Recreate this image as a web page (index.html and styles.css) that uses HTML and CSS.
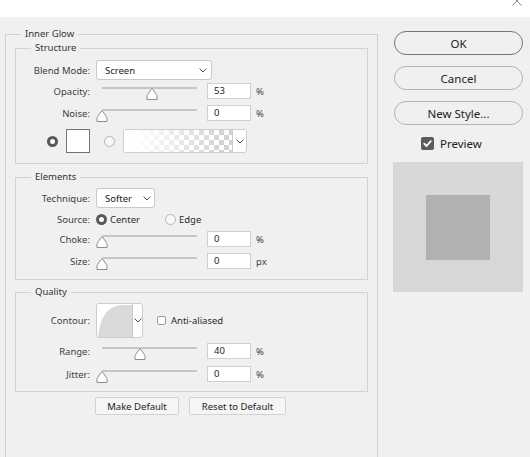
FILE: index.html
```html
<!DOCTYPE html>
<html lang="en">
<head>
<meta charset="utf-8">
<title>Layer Style - Inner Glow</title>
<link rel="stylesheet" href="styles.css">
</head>
<body>
<div class="titlebar">
  <svg class="close" viewBox="0 0 10 10" width="10" height="10"><path d="M0.5 0.5 L9.5 9.5 M9.5 0.5 L0.5 9.5" stroke="#8a8a8a" stroke-width="1" fill="none"/></svg>
</div>
<div class="main">
  <fieldset class="group outer">
    <legend>Inner Glow</legend>

    <fieldset class="group sub structure">
      <legend>Structure</legend>
      <div class="row row-select">
        <span class="lbl">Blend Mode:</span>
        <div class="select sel-blend"><span>Screen</span><svg class="chev" viewBox="0 0 8 5" width="8" height="5"><polyline points="0.5,0.5 4,4 7.5,0.5" fill="none" stroke="#555" stroke-width="1"/></svg></div>
      </div>
      <div class="row row-slider r-opacity">
        <span class="lbl">Opacity:</span>
        <div class="slider"><div class="track"></div><svg class="thumb" style="left:50px" viewBox="0 0 12 12" width="12" height="12"><path d="M1 11.5 V8.2 Q1 7.4 1.6 6.6 L5 1.6 Q6 0.4 7 1.6 L10.4 6.6 Q11 7.4 11 8.2 V11.5 Z" fill="#fff" stroke="#8c8c8c" stroke-width="1"/></svg></div>
        <div class="num">53</div><span class="unit">%</span>
      </div>
      <div class="row row-slider r-noise">
        <span class="lbl">Noise:</span>
        <div class="slider"><div class="track"></div><svg class="thumb" style="left:0px" viewBox="0 0 12 12" width="12" height="12"><path d="M1 11.5 V8.2 Q1 7.4 1.6 6.6 L5 1.6 Q6 0.4 7 1.6 L10.4 6.6 Q11 7.4 11 8.2 V11.5 Z" fill="#fff" stroke="#8c8c8c" stroke-width="1"/></svg></div>
        <div class="num">0</div><span class="unit">%</span>
      </div>
      <div class="row row-color">
        <svg class="radio r-first" viewBox="0 0 11 11" width="11" height="11"><circle cx="5.5" cy="5.5" r="4" fill="#fff" stroke="#585858" stroke-width="3"/></svg>
        <div class="swatch"></div>
        <svg class="radio r-second" viewBox="0 0 11 11" width="11" height="11"><circle cx="5.5" cy="5.5" r="5" fill="#f7f7f7" stroke="#b3b3b3" stroke-width="1"/></svg>
        <div class="gradient">
          <div class="grad-fill"></div>
          <div class="grad-drop"><svg class="chev" viewBox="0 0 8 5" width="8" height="5"><polyline points="0.5,0.5 4,4 7.5,0.5" fill="none" stroke="#555" stroke-width="1"/></svg></div>
        </div>
      </div>
    </fieldset>

    <fieldset class="group sub elements">
      <legend>Elements</legend>
      <div class="row row-select">
        <span class="lbl">Technique:</span>
        <div class="select sel-tech"><span>Softer</span><svg class="chev" viewBox="0 0 8 5" width="8" height="5"><polyline points="0.5,0.5 4,4 7.5,0.5" fill="none" stroke="#555" stroke-width="1"/></svg></div>
      </div>
      <div class="row row-source">
        <span class="lbl">Source:</span>
        <div class="option opt-first">
          <svg class="radio" viewBox="0 0 11 11" width="11" height="11"><circle cx="5.5" cy="5.5" r="4" fill="#fff" stroke="#585858" stroke-width="3"/></svg>
          <span class="opt-text">Center</span>
        </div>
        <div class="option">
          <svg class="radio" viewBox="0 0 11 11" width="11" height="11"><circle cx="5.5" cy="5.5" r="5" fill="#f7f7f7" stroke="#b3b3b3" stroke-width="1"/></svg>
          <span class="opt-text">Edge</span>
        </div>
      </div>
      <div class="row row-slider r-choke">
        <span class="lbl">Choke:</span>
        <div class="slider"><div class="track"></div><svg class="thumb" style="left:0px" viewBox="0 0 12 12" width="12" height="12"><path d="M1 11.5 V8.2 Q1 7.4 1.6 6.6 L5 1.6 Q6 0.4 7 1.6 L10.4 6.6 Q11 7.4 11 8.2 V11.5 Z" fill="#fff" stroke="#8c8c8c" stroke-width="1"/></svg></div>
        <div class="num">0</div><span class="unit">%</span>
      </div>
      <div class="row row-slider r-size">
        <span class="lbl">Size:</span>
        <div class="slider"><div class="track"></div><svg class="thumb" style="left:0px" viewBox="0 0 12 12" width="12" height="12"><path d="M1 11.5 V8.2 Q1 7.4 1.6 6.6 L5 1.6 Q6 0.4 7 1.6 L10.4 6.6 Q11 7.4 11 8.2 V11.5 Z" fill="#fff" stroke="#8c8c8c" stroke-width="1"/></svg></div>
        <div class="num">0</div><span class="unit">px</span>
      </div>
    </fieldset>

    <fieldset class="group sub quality">
      <legend>Quality</legend>
      <div class="row row-contour">
        <span class="lbl">Contour:</span>
        <div class="contour">
          <svg class="curve" viewBox="0 0 35 33" width="35" height="33"><path d="M1 33 Q4 2 25 1 L35 1 L35 33 Z" fill="#dadada"/></svg>
          <div class="contour-drop"><svg class="chev" viewBox="0 0 8 5" width="8" height="5"><polyline points="0.5,0.5 4,4 7.5,0.5" fill="none" stroke="#555" stroke-width="1"/></svg></div>
        </div>
        <div class="check-empty"></div>
        <span class="check-text">Anti-aliased</span>
      </div>
      <div class="row row-slider r-range">
        <span class="lbl">Range:</span>
        <div class="slider"><div class="track"></div><svg class="thumb" style="left:38px" viewBox="0 0 12 12" width="12" height="12"><path d="M1 11.5 V8.2 Q1 7.4 1.6 6.6 L5 1.6 Q6 0.4 7 1.6 L10.4 6.6 Q11 7.4 11 8.2 V11.5 Z" fill="#fff" stroke="#8c8c8c" stroke-width="1"/></svg></div>
        <div class="num">40</div><span class="unit">%</span>
      </div>
      <div class="row row-slider r-jitter">
        <span class="lbl">Jitter:</span>
        <div class="slider"><div class="track"></div><svg class="thumb" style="left:0px" viewBox="0 0 12 12" width="12" height="12"><path d="M1 11.5 V8.2 Q1 7.4 1.6 6.6 L5 1.6 Q6 0.4 7 1.6 L10.4 6.6 Q11 7.4 11 8.2 V11.5 Z" fill="#fff" stroke="#8c8c8c" stroke-width="1"/></svg></div>
        <div class="num">0</div><span class="unit">%</span>
      </div>
    </fieldset>

    <div class="defaults">
      <button class="small-btn btn-make">Make Default</button>
      <button class="small-btn btn-reset">Reset to Default</button>
    </div>
  </fieldset>

  <div class="side">
    <button class="pill pill-default">OK</button>
    <button class="pill">Cancel</button>
    <button class="pill">New Style...</button>
    <div class="preview-toggle">
      <svg class="check-on" viewBox="0 0 13 13" width="13" height="13"><rect x="0" y="0" width="13" height="13" rx="2" fill="#5b5b5b"/><polyline points="3.2,6.6 5.6,9 9.8,4.2" fill="none" stroke="#fff" stroke-width="1.8" stroke-linecap="round" stroke-linejoin="round"/></svg>
      <span>Preview</span>
    </div>
    <div class="preview">
      <div class="preview-inner"></div>
    </div>
  </div>
</div>
</body>
</html>
```

FILE: styles.css
```css
* {
  box-sizing: border-box;
}

html,
body {
  margin: 0;
  height: 100%;
  overflow: hidden;
}

body {
  background: #f0f0f0;
  font-family: "Noto Sans", "Open Sans", sans-serif;
  font-size: 9.5px;
  color: #3e3e3e;
}

.titlebar {
  position: relative;
  height: 17px;
  background: #fff;
}

.close {
  position: absolute;
  right: 8px;
  top: -4px;
}

.main {
  display: flex;
  align-items: flex-start;
  padding-left: 5px;
}

/* fieldsets */
.group {
  margin: 0;
  padding: 0;
  min-width: 0;
  border: 1px solid #d2d2d2;
}

.group > legend {
  margin-left: 15px;
  padding: 0 4px;
  height: 14px;
  line-height: 14px;
  color: #333;
}

/* the outer group runs on past the bottom of the window */
.outer {
  width: 373px;
  margin-top: 10px;
  padding-bottom: 42px;
  border-bottom-width: 0;
}

.sub {
  margin: 0 9px;
}

.structure {
  padding: 5px 0 10px;
}

.elements {
  margin-top: 6px;
  padding: 4px 0 10px;
}

.quality {
  margin-top: 5px;
  padding: 4px 0 9px;
}

/* rows */
.row {
  display: flex;
  align-items: center;
}

.lbl {
  flex: none;
  width: 74px;
  margin-right: 6px;
  text-align: right;
  white-space: nowrap;
}

.row-select {
  height: 20px;
}

.row-slider {
  height: 16px;
}

.r-opacity {
  margin-top: 3px;
}

.r-noise {
  margin-top: 6px;
}

.row-color {
  height: 24px;
  margin-top: 8px;
}

.row-source {
  height: 14px;
  margin-top: 4px;
}

.r-choke {
  margin-top: 5px;
}

.r-size {
  margin-top: 6px;
}

.row-contour {
  height: 35px;
}

.r-range {
  margin-top: 5px;
}

.r-jitter {
  margin-top: 7px;
}

/* select boxes */
.select {
  display: flex;
  align-items: center;
  justify-content: space-between;
  height: 20px;
  padding: 0 4px 0 8px;
  background: #fff;
  border: 1px solid #c9c9c9;
  border-radius: 3px;
  color: #222;
}

.sel-blend {
  width: 116px;
}

.sel-tech {
  width: 59px;
  padding-right: 3px;
}

.chev {
  display: block;
  flex: none;
}

/* sliders */
.slider {
  position: relative;
  flex: none;
  width: 105px;
  height: 16px;
  margin-right: 6px;
}

.track {
  position: absolute;
  left: 6px;
  top: 4px;
  width: 95px;
  height: 2px;
  background: #c6c6c6;
}

.thumb {
  position: absolute;
  top: 5px;
  display: block;
}

.num {
  flex: none;
  width: 44px;
  height: 16px;
  padding-left: 6px;
  line-height: 14px;
  background: #fff;
  border: 1px solid #cfcfcf;
  color: #222;
}

.unit {
  margin-left: 5px;
}

/* color row */
.radio {
  display: block;
  flex: none;
}

.r-first {
  margin-left: 31px;
}

.swatch {
  flex: none;
  width: 24px;
  height: 24px;
  margin-left: 8px;
  background: #fff;
  border: 1px solid #737373;
}

.r-second {
  margin-left: 14px;
}

.gradient {
  display: flex;
  flex: none;
  width: 124px;
  height: 24px;
  margin-left: 8px;
  background: #fff;
  border: 1px solid #cdcdcd;
  border-radius: 3px;
  overflow: hidden;
}

.grad-fill {
  flex: 1;
  background:
    linear-gradient(to right, #fff 8%, rgba(255, 255, 255, 0) 92%),
    conic-gradient(#d2d2d2 25%, #fff 0 50%, #d2d2d2 0 75%, #fff 0);
  background-size: 100% 100%, 10px 10px;
}

.grad-drop {
  display: flex;
  align-items: center;
  justify-content: center;
  flex: none;
  width: 14px;
  border-left: 1px solid #cdcdcd;
}

/* source options */
.option {
  display: flex;
  align-items: center;
}

.opt-first {
  width: 69px;
}

.opt-text {
  margin-left: 3px;
  color: #2a2a2a;
}

/* contour */
.contour {
  display: flex;
  flex: none;
  width: 47px;
  height: 35px;
  background: #fff;
  border: 1px solid #cdcdcd;
  border-radius: 3px;
  overflow: hidden;
}

.curve {
  display: block;
  flex: none;
}

.contour-drop {
  display: flex;
  align-items: center;
  justify-content: center;
  flex: 1;
  border-left: 1px solid #cdcdcd;
}

.check-empty {
  flex: none;
  width: 9px;
  height: 9px;
  margin-left: 14px;
  background: #fbfbfb;
  border: 1px solid #9c9c9c;
  border-radius: 2px;
}

.check-text {
  margin-left: 5px;
  color: #2a2a2a;
}

/* default buttons */
.defaults {
  display: flex;
  gap: 10px;
  margin-top: 5px;
  padding-left: 89px;
}

.small-btn {
  height: 18px;
  margin: 0;
  padding: 0;
  font: inherit;
  color: #222;
  background: #f5f5f5;
  border: 1px solid #d3d3d3;
  border-radius: 2px;
}

.btn-make {
  width: 84px;
}

.btn-reset {
  width: 97px;
}

/* side column */
.side {
  display: flex;
  flex-direction: column;
  width: 130px;
  margin-left: 15px;
  padding-top: 14px;
}

.pill {
  width: 129px;
  height: 24px;
  margin: 0 0 0 1px;
  padding: 0;
  font: inherit;
  font-size: 11.5px;
  color: #222;
  background: #f0f0f0;
  border: 1px solid #b3b3b3;
  border-radius: 12px;
}

.pill + .pill {
  margin-top: 11px;
}

.pill-default {
  border-color: #747474;
}

.preview-toggle {
  display: flex;
  align-items: center;
  height: 13px;
  margin-top: 12px;
  padding-left: 28px;
  font-size: 11.5px;
  color: #222;
}

.check-on {
  display: block;
  flex: none;
  margin-right: 6px;
}

.preview {
  display: flex;
  align-items: center;
  justify-content: center;
  width: 130px;
  height: 130px;
  margin-top: 12px;
  background: #d6d7d7;
}

.preview-inner {
  width: 64px;
  height: 65px;
  background: #b1b1b1;
}
```
